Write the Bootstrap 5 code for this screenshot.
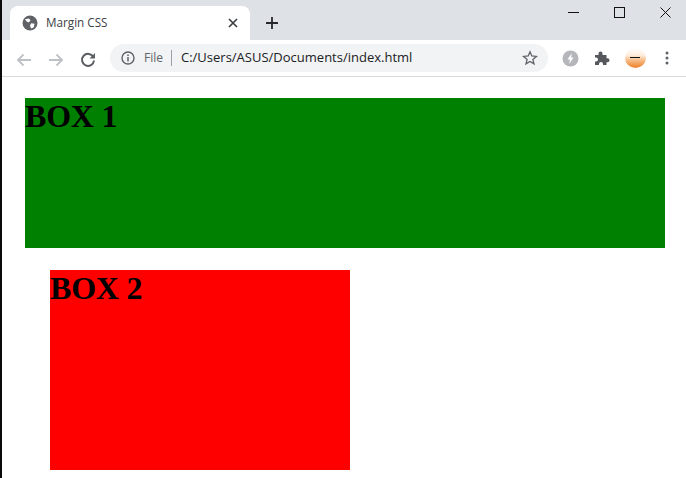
<!DOCTYPE html>
<html lang="en">
<head>
<meta charset="utf-8">
<title>Margin CSS</title>
<link href="https://cdn.jsdelivr.net/npm/bootstrap@5.3.0/dist/css/bootstrap.min.css" rel="stylesheet">
<style>
html,body{height:478px;overflow:hidden;background:#fff;}
body{border-left:2px solid #0a0a0a;font-family:"Open Sans","Noto Sans",sans-serif;color:#3c4043;}
.strip{height:40px;background:#dee1e6;padding-left:8px;}
.tabx{width:240px;height:34px;background:#fff;border-radius:8px 8px 0 0;padding:0 12px 0 12px;font-size:11.7px;flex-shrink:0;}
.tabx svg.globe{margin-right:8px;}
.winbtns{margin-left:auto;height:24px;align-self:flex-start;}
.winbtn{width:46px;height:24px;padding-left:4px;}
.newtab{margin-left:15px;margin-bottom:10px;}
.toolbar{height:37px;background:#fff;border-bottom:1px solid #d9dadc;padding-left:13px;}
.navic{width:20px;margin-right:12px;flex-shrink:0;}
.navic.lastnav{margin-right:11px;padding-left:1px;}
.omni{width:438px;height:28px;background:#f1f3f4;border-radius:14px;padding:0 10px 0 11px;font-size:13px;flex-shrink:0;}
.filelbl{color:#5f6368;font-size:12px;margin-left:9px;}
.sep{width:1px;height:16px;background:#9aa0a6;margin:0 9px 0 8px;}
.urltxt{color:#202124;font-size:13px;}
.exts{margin-left:6px;}
.extslot{width:32px;}
.avslot{margin-left:1px;}
.pagebody{padding:21px 0 0 23px;}
.demo{font-family:"Liberation Serif",serif;color:#000;}
.demo h1{font-family:"Liberation Serif",serif;font-weight:700;font-size:32px;line-height:37px;margin:0;letter-spacing:-.2px;}
.boxa{width:640px;height:150px;background:#008000;}
.boxb{width:300px;height:200px;background:#f00;margin:22px 0 0 25px;}
.avatar{width:21px;height:20px;border-radius:50%;background:linear-gradient(#ffffff 0%,#fdeedf 35%,#f6b67c 65%,#ec7f2a 100%);}
.avatar i{display:block;width:10px;height:1px;background:#111;margin-top:-2px;}
</style>
</head>
<body>
<div class="strip d-flex align-items-end">
  <div class="tabx d-flex align-items-center">
    <svg class="globe" width="16" height="16" viewBox="0 0 16 16"><circle cx="8" cy="8" r="7.500" fill="#5f6368"/><path d="M3 4.200 6.800 3.500 8.600 5.200 6.800 7.400 4.600 6.600ZM9.200 8.200 12.600 8.800 11.600 12.400 9 13.600 8 10.600Z" fill="#fff"/></svg>
    <span>Margin CSS</span>
    <svg class="ms-auto" width="10" height="10" viewBox="0 0 10 10"><path d="M1 1 9 9M9 1 1 9" stroke="#3c4043" stroke-width="1.700"/></svg>
  </div>
  <svg class="newtab" width="14" height="14" viewBox="0 0 14 14"><path d="M7 1V13M1 7H13" stroke="#26282b" stroke-width="1.800"/></svg>
  <div class="winbtns d-flex">
    <div class="winbtn d-flex align-items-center justify-content-center"><svg width="11" height="11" viewBox="0 0 11 11"><path d="M0 5.500H11" stroke="#111" stroke-width="1"/></svg></div>
    <div class="winbtn d-flex align-items-center justify-content-center"><svg width="11" height="11" viewBox="0 0 11 11"><rect x=".5" y=".5" width="10" height="10" fill="none" stroke="#111"/></svg></div>
    <div class="winbtn d-flex align-items-center justify-content-center"><svg width="11" height="11" viewBox="0 0 11 11"><path d="M.5.5 10.500 10.500M10.500.5 .5 10.500" stroke="#111" stroke-width="1"/></svg></div>
  </div>
</div>
<div class="toolbar d-flex align-items-center">
  <div class="navic"><svg width="18" height="16" viewBox="0 0 18 16"><path d="M16 8H3M8.500 2.500 3 8l5.500 5.500" fill="none" stroke="#bdc1c6" stroke-width="1.800"/></svg></div>
  <div class="navic"><svg width="18" height="16" viewBox="0 0 18 16"><path d="M2 8H15M9.500 2.500 15 8l-5.500 5.500" fill="none" stroke="#bdc1c6" stroke-width="1.800"/></svg></div>
  <div class="navic lastnav"><svg width="16" height="16" viewBox="0 0 16 16"><path d="M13.300 5A6 6 0 1 0 14 8.500" fill="none" stroke="#5a5e63" stroke-width="2"/><path d="M15 1V6.500H9.500Z" fill="#5a5e63"/></svg></div>
  <div class="omni d-flex align-items-center">
    <svg width="14" height="14" viewBox="0 0 14 14"><circle cx="7" cy="7" r="6" fill="none" stroke="#5f6368" stroke-width="1.400"/><path d="M7 6V10.500M7 3.400V5" stroke="#5f6368" stroke-width="1.500"/></svg>
    <span class="filelbl">File</span><span class="sep"></span>
    <span class="urltxt">C:/Users/ASUS/Documents/index.html</span>
    <svg class="ms-auto" width="16" height="16" viewBox="0 0 16 16"><path d="M8 1.800 9.800 6 14.400 6.400 10.900 9.400 12 13.900 8 11.500 4 13.900 5.100 9.400 1.600 6.400 6.200 6Z" fill="none" stroke="#5f6368" stroke-width="1.300"/></svg>
  </div>
  <div class="exts d-flex align-items-center">
    <div class="extslot d-flex justify-content-center"><svg width="17" height="17" viewBox="0 0 17 17"><circle cx="8.500" cy="8.500" r="8" fill="#b4b6b9"/><path d="M9.800 3 5.500 9.500H8L7.200 14 11.500 7.500H9Z" fill="#fff"/></svg></div>
    <div class="extslot d-flex justify-content-center"><svg width="16" height="16" viewBox="0 0 16 16"><path d="M1 5H4.500V3.500a2 2 0 0 1 4 0V5H12.500V8.200H13.500a2 2 0 0 1 0 4H12.500V15H9V14a2 2 0 0 0-4 0V15H1V11.500H2a2 2 0 0 0 0-4H1Z" fill="#55585c"/></svg></div>
    <div class="extslot avslot d-flex justify-content-center"><div class="avatar d-flex align-items-center justify-content-center"><i></i></div></div>
    <div class="extslot d-flex justify-content-center"><svg width="4" height="14" viewBox="0 0 4 14"><circle cx="2" cy="2" r="1.500" fill="#5f6368"/><circle cx="2" cy="7" r="1.500" fill="#5f6368"/><circle cx="2" cy="12" r="1.500" fill="#5f6368"/></svg></div>
  </div>
</div>
<div class="pagebody demo">
  <div class="boxa"><h1>BOX 1</h1></div>
  <div class="boxb"><h1>BOX 2</h1></div>
</div>
<script src="https://cdn.jsdelivr.net/npm/bootstrap@5.3.0/dist/js/bootstrap.bundle.min.js"></script>
</body>
</html>
